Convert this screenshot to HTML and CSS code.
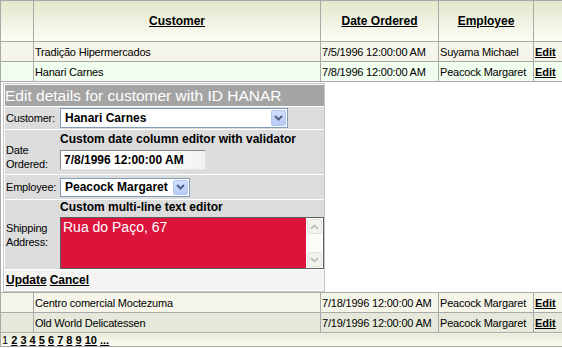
FILE: index.html
```html
<!DOCTYPE html>
<html>
<head>
<meta charset="utf-8">
<link rel="stylesheet" href="styles.css">
</head>
<body>
<table class="grid">
  <colgroup>
    <col class="w0"><col class="w1"><col class="w2"><col class="w3"><col class="w4">
  </colgroup>
  <thead>
    <tr class="head">
      <th></th>
      <th><a href="#">Customer</a></th>
      <th><a href="#">Date Ordered</a></th>
      <th><a href="#">Employee</a></th>
      <th></th>
    </tr>
  </thead>
  <tbody>
    <tr class="row beige">
      <td></td><td>Tradição Hipermercados</td><td>7/5/1996 12:00:00 AM</td><td>Suyama Michael</td><td class="edit"><a href="#">Edit</a></td>
    </tr>
    <tr class="row green">
      <td></td><td>Hanari Carnes</td><td>7/8/1996 12:00:00 AM</td><td>Peacock Margaret</td><td class="edit"><a href="#">Edit</a></td>
    </tr>
    <tr class="editrow">
      <td colspan="5">
        <div class="form">
          <div class="title">Edit details for customer with ID HANAR</div>
          <div class="frow r-cust">
            <div class="lbl">Customer:</div>
            <div class="fld">
              <div class="combo combo-cust"><span class="val">Hanari Carnes</span><span class="btn"><svg width="9" height="6" viewBox="0 0 9 6"><path d="M1 1 L4.5 4.5 L8 1" fill="none" stroke="#4d6185" stroke-width="2"/></svg></span></div>
            </div>
          </div>
          <div class="frow r-date">
            <div class="lbl">Date<br>Ordered:</div>
            <div class="fld">
              <div class="cap">Custom date column editor with validator</div>
              <div class="tbox">7/8/1996 12:00:00 AM</div>
            </div>
          </div>
          <div class="frow r-emp">
            <div class="lbl">Employee:</div>
            <div class="fld">
              <div class="combo combo-emp"><span class="val">Peacock Margaret</span><span class="btn"><svg width="9" height="6" viewBox="0 0 9 6"><path d="M1 1 L4.5 4.5 L8 1" fill="none" stroke="#4d6185" stroke-width="2"/></svg></span></div>
            </div>
          </div>
          <div class="frow r-ship">
            <div class="lbl">Shipping<br>Address:</div>
            <div class="fld">
              <div class="cap">Custom multi-line text editor</div>
              <div class="tarea">
                <div class="ttext">Rua do Paço, 67</div>
                <div class="sbar">
                  <span class="sbtn"><svg width="9" height="6" viewBox="0 0 9 6"><path d="M1 5 L4.5 1.5 L8 5" fill="none" stroke="#c4c4bc" stroke-width="2"/></svg></span>
                  <span class="sbtn"><svg width="9" height="6" viewBox="0 0 9 6"><path d="M1 1 L4.5 4.5 L8 1" fill="none" stroke="#c4c4bc" stroke-width="2"/></svg></span>
                </div>
              </div>
            </div>
          </div>
          <div class="frow r-btns"><a href="#">Update</a> <a href="#">Cancel</a></div>
        </div>
      </td>
    </tr>
    <tr class="row beige">
      <td></td><td>Centro comercial Moctezuma</td><td>7/18/1996 12:00:00 AM</td><td>Peacock Margaret</td><td class="edit"><a href="#">Edit</a></td>
    </tr>
    <tr class="row olive">
      <td></td><td>Old World Delicatessen</td><td>7/19/1996 12:00:00 AM</td><td>Peacock Margaret</td><td class="edit"><a href="#">Edit</a></td>
    </tr>
    <tr class="pager">
      <td colspan="5">1 <a href="#">2</a> <a href="#">3</a> <a href="#">4</a> <a href="#">5</a> <a href="#">6</a> <a href="#">7</a> <a href="#">8</a> <a href="#">9</a> <a href="#">10</a> <a href="#">...</a></td>
    </tr>
  </tbody>
</table>
</body>
</html>
```

FILE: styles.css
```css
* { box-sizing: border-box; }
body {
  margin: 0;
  background: #fff;
  font-family: "Liberation Sans", Arial, sans-serif;
  font-size: 11px;
  letter-spacing: -0.2px;
  color: #000;
}
a { color: #000; font-weight: bold; text-decoration: underline; letter-spacing: 0; }

.grid {
  border-collapse: collapse;
  table-layout: fixed;
  width: 562px;
  border: 1px solid #808080;
}
.w0 { width: 33px; }
.w1 { width: 287px; }
.w2 { width: 118px; }
.w3 { width: 95px; }
.w4 { width: 29px; }

.grid th, .grid td {
  border: 1px solid #a9a9a9;
  padding: 0 0 0 1px;
  white-space: nowrap;
  overflow: hidden;
  text-align: left;
  font-weight: normal;
}
.head { height: 41px; background: linear-gradient(#e2e7cc, #fcfdf6); }
.head th { text-align: center; padding: 0; font-size: 12px; }
.row { height: 20px; }
.beige { background: #f6f5ea; }
.green { background: #f1fdef; }
.olive { background: #e6e9d9; }
.grid td.edit { padding-left: 1px; }

.editrow td { padding: 1px 0 0 2px; background: #fff; }
.form {
  width: 322px;
  border: 1px solid #c6c6c6;
  padding: 1px 0 1px 1px;
  display: flex;
  flex-direction: column;
  gap: 1px;
  background: #fff;
}
.title {
  background: #a4a4a4;
  color: #fff;
  font-size: 15.5px;
  letter-spacing: 0;
  height: 21px;
  line-height: 21px;
  padding-left: 0;
}
.frow {
  background: #dcdcdc;
  display: flex;
  align-items: center;
}
.lbl { width: 55px; padding-left: 1px; line-height: 14px; flex: none; }
.fld { flex: 1; display: flex; flex-direction: column; }
.r-cust { height: 22px; }
.r-date { height: 44px; }
.r-date .lbl { align-self: flex-end; padding-bottom: 3px; }
.r-emp { height: 24px; }
.r-ship { height: 69px; align-items: stretch; }
.r-ship .lbl { align-self: center; }
.r-btns { background: #f3f3f3; height: 20px; padding-left: 1px; gap: 3px; font-size: 12px; }
.r-btns a { letter-spacing: 0; }

.cap { font-weight: bold; font-size: 12px; letter-spacing: 0; line-height: 14px; }
.r-date .cap { margin-top: -2px; }

.combo {
  border: 1px solid #7f9db9;
  background: #fff;
  height: 20px;
  display: flex;
  align-items: center;
  justify-content: space-between;
  padding: 0 1px 0 4px;
  font-weight: bold;
  font-size: 12px;
  letter-spacing: 0;
}
.combo-cust { width: 228px; }
.combo-emp { width: 130px; height: 19px; }
.btn {
  width: 15px;
  height: 16px;
  background: linear-gradient(#d2defd, #b8cbf8);
  border: 1px solid #b5c7ef;
  border-radius: 2px;
  display: flex;
  align-items: center;
  justify-content: center;
}
.combo-emp .btn { height: 15px; }

.tbox {
  width: 146px;
  height: 20px;
  margin-top: 4px;
  border: 1px solid;
  border-color: #8a8a8a #e2e2e2 #e2e2e2 #8a8a8a;
  background: linear-gradient(90deg, #fff 70%, #f1f1f1);
  font-weight: bold;
  font-size: 12px;
  letter-spacing: 0;
  line-height: 18px;
  padding-left: 3px;
}

.tarea {
  margin-top: 3px;
  height: 53px;
  border: 1px solid #5f5f5f;
  background: #dc143c;
  display: flex;
}
.ttext {
  flex: 1;
  color: #fff;
  font-size: 14px;
  letter-spacing: 0;
  padding: 1px 0 0 2px;
  line-height: 16px;
}
.sbar {
  width: 17px;
  background: #fcfcf8;
  display: flex;
  flex-direction: column;
  justify-content: space-between;
  padding: 1px;
}
.sbtn {
  height: 15px;
  border: 1px solid #e2e2dc;
  border-radius: 2px;
  background: #f4f4ee;
  display: flex;
  align-items: center;
  justify-content: center;
}

.pager td {
  height: 14px;
  background: linear-gradient(#e8ebd8, #fbfcf3);
  padding: 0 0 0 1px;
  line-height: 12px;
  letter-spacing: 0;
}
.pager a { letter-spacing: 0; }
```
